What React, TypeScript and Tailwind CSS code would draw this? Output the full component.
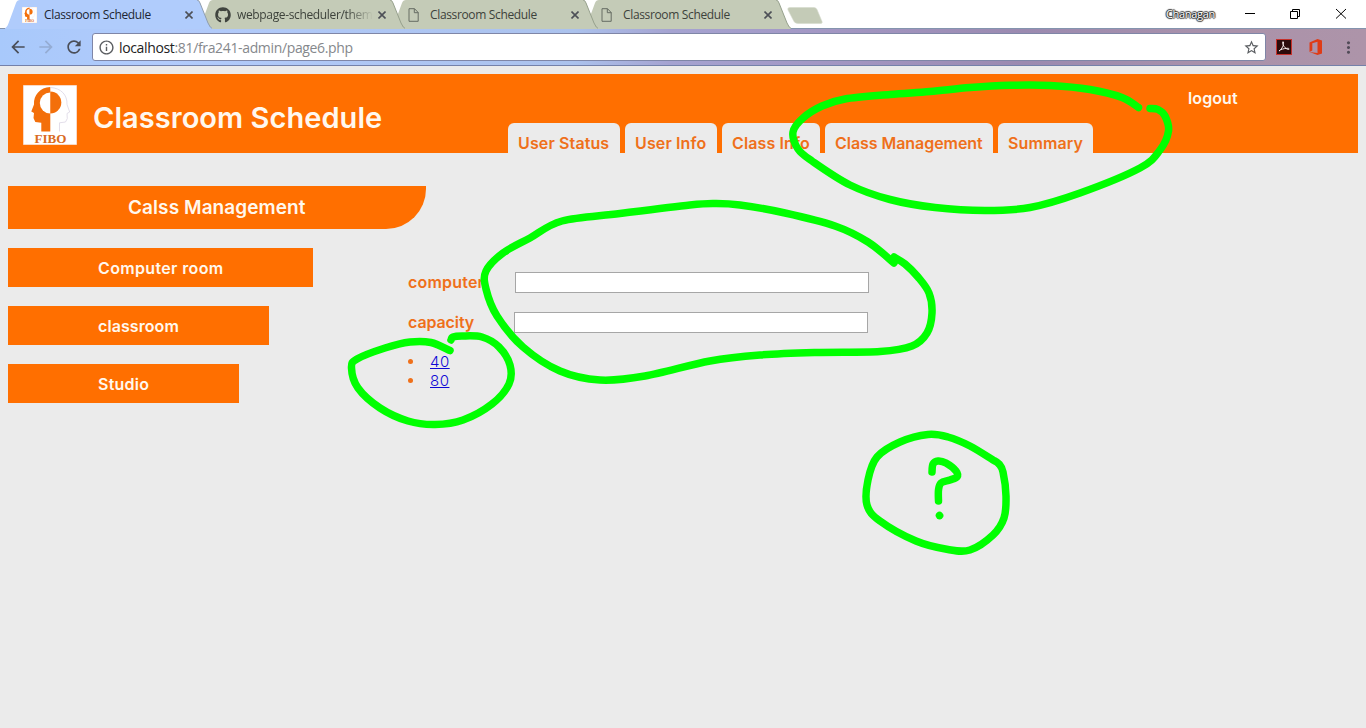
import React from "react";
import { FaGithub } from "react-icons/fa";
import { MdArrowBack, MdArrowForward, MdRefresh, MdMoreVert, MdStarBorder, MdInfoOutline } from "react-icons/md";

type Point = [number, number];

/** Smooth curve through a list of points (Catmull-Rom converted to cubic segments). */
function smooth(points: Point[]): string {
  let d = `M${points[0][0]} ${points[0][1]}`;
  for (let i = 0; i < points.length - 1; i++) {
    const p0 = points[Math.max(0, i - 1)];
    const p1 = points[i];
    const p2 = points[i + 1];
    const p3 = points[Math.min(points.length - 1, i + 2)];
    d += `C${p1[0] + (p2[0] - p0[0]) / 6} ${p1[1] + (p2[1] - p0[1]) / 6} ${p2[0] - (p3[0] - p1[0]) / 6} ${p2[1] - (p3[1] - p1[1]) / 6} ${p2[0]} ${p2[1]}`;
  }
  return d;
}

const strokes: Point[][] = [
  [[1138.5, 107.5], [1122, 97.5], [1090, 89.5], [1050, 85.5], [1010, 85.3], [970, 87.5], [930, 91.5], [890, 94.5], [845, 99], [822, 106], [803, 118], [793, 132], [798, 149], [812, 161], [850, 185], [890, 199.5], [935, 207.5], [985, 210.5], [1030, 207.5], [1080, 193], [1140, 168], [1160, 150], [1168.5, 131], [1165, 116], [1158, 109.500], [1150, 108.5]],
  [[894, 263], [868, 242], [835, 226], [785, 213], [740, 205], [715, 203.5], [690, 205], [620, 213.5], [562, 221], [530, 238], [503, 253], [486, 271], [486, 289], [497, 316], [523, 347], [560, 371], [600, 380], [645, 376], [710, 361], [760, 355], [815, 352.5], [880, 351.5], [912, 346], [927, 333], [932, 313], [929, 293], [918, 277], [905, 264], [894, 257]],
  [[450, 350.5], [431, 342.5], [410, 342], [385, 348], [357, 359], [351.5, 368], [358, 388], [380, 408], [408, 421], [435, 424.5], [463, 420], [492, 404], [509, 384], [510, 365], [499, 347], [482, 337], [462, 336], [453, 337], [451, 340]],
  [[993, 460], [970, 446], [948, 437], [928, 434.5], [900, 442], [877, 457], [868, 480], [867, 505], [880, 521], [916, 541], [948, 549.5], [970, 550], [993, 535], [1004, 518], [1006, 496], [1003, 472], [999, 464], [993, 460]],
  [[932, 472], [933, 464], [938, 461], [946, 463], [956, 471], [957, 477], [950, 480], [941, 483], [938.5, 490], [938.5, 501]],
  [[939.5, 515.5], [939.6, 515.6]],
];

function Fibo({ className }: { className: string }) {
  return (
    <svg viewBox="0 0 54 60" className={className} preserveAspectRatio="none">
      <rect width="54" height="60" fill="#fff" stroke="#f3b28a" />
      <path d="M27.300 2C17 2.500 10.500 10 11 19.500L8.300 26.500l2.700 1.500-.5 5 1.800 4 6 .8V46.500h9z" fill="#f36f0a" />
      <path d="M27.300 2.500C38 3 44.500 10 44 19.500L46.700 27l-2.700 1.500.3 5L42.500 37l-6 .8V46.500" fill="none" stroke="#dcd5e4" strokeWidth=".8" />
      <path d="M27.300 7.500a10.500 10.500 0 0 0 0 21z" fill="#fff" />
      <path d="M27.300 6.500a11 11 0 0 1 0 22z" fill="#f36f0a" />
      <text x="11.500" y="57.500" fontFamily="Liberation Serif, serif" fontWeight="bold" fontSize="11.500" textLength="32" lengthAdjust="spacingAndGlyphs" fill="#d96a20">FIBO</text>
    </svg>
  );
}

function Page() {
  return (
    <svg viewBox="0 0 11 14" className="h-3.5 w-[11px] shrink-0">
      <path d="M1 .7h5.500L10.200 4.500v8.800H1zM6.300.7v4h4" fill="none" stroke="#666c63" />
    </svg>
  );
}

function Cross() {
  return (
    <svg viewBox="0 0 8 8" className="size-2 shrink-0">
      <path d="M.5.5l7 7M7.500.5l-7 7" stroke="#4d5057" strokeWidth="1.600" />
    </svg>
  );
}

function BrowserTab({ icon, label, active = false, faded = false }: { icon: React.ReactNode; label: string; active?: boolean; faded?: boolean }) {
  const fade = faded ? " [mask-image:linear-gradient(90deg,#000_110px,transparent_136px)]" : "";
  return (
    <div className={active ? "relative z-40 -mr-[14px] h-[29px] w-[207px]" : "relative -mr-[14px] h-[28px] w-[207px]"}>
      <svg viewBox="0 0 207 29" className="absolute left-0 top-0 h-[29px] w-[207px]">
        <path d="M-2 29C2 28 3 25 4 22L11 3Q12 0 15 0H192Q194 0 195 3L203 23Q205 28 208 29z" fill={active ? "#b0ccfc" : "#c4cbb7"} />
        <path d="M192 0Q194 0 195 3L203 23Q205 28 208 29" fill="none" stroke={active ? "#8f9dae" : "#96a08c"} />
      </svg>
      <div className="relative flex h-[29px] items-center pl-[17px] pr-[19px]">
        <div className="flex w-[22px] shrink-0 items-center">{icon}</div>
        <span className={(active ? "flex-1 overflow-hidden whitespace-nowrap text-[12px] tracking-[-0.350px] text-[#202633]" : "flex-1 overflow-hidden whitespace-nowrap text-[12px] tracking-[-0.350px] text-[#3d423b]") + fade}>{label}</span>
        <Cross />
      </div>
    </div>
  );
}

function Chrome() {
  return (
    <div className="font-['Open_Sans',sans-serif]">
      <div className="flex h-[28px] bg-white pl-[5px]">
        <div className="relative z-40 flex"><BrowserTab active label="Classroom Schedule" icon={<Fibo className="h-4 w-[15px]" />} /></div>
        <div className="relative z-30 flex"><BrowserTab faded label="webpage-scheduler/them" icon={<FaGithub size={16} color="#40443f" />} /></div>
        <div className="relative z-20 flex"><BrowserTab label="Classroom Schedule" icon={<Page />} /></div>
        <div className="relative z-10 flex"><BrowserTab label="Classroom Schedule" icon={<Page />} /></div>
        <svg viewBox="0 0 36 18" className="ml-[10px] mt-[7px] h-[18px] w-9">
          <path d="M3 .5h24q2 0 3 2l5 12q1 2-2 2H11q-3 0-4-2L1 3q-1-2.500 2-2.500z" fill="#c4cbb7" stroke="#d5dacc" strokeWidth=".6" />
        </svg>
        <div className="ml-auto flex h-[28px] items-center">
          <span className="mr-[30px] text-[11px] tracking-[-0.300px] text-white [text-shadow:0_1px_1px_#222,1px_0_1px_#222,-1px_0_1px_#222,0_-1px_1px_#222]">Chanagan</span>
          <svg viewBox="0 0 104 12" className="mb-[2px] mr-[17px] h-3 w-[104px]" fill="none" stroke="#000">
            <path d="M0 6.500h10M45.500 4.500h7v7h-7zM47.500 4.500v-2h7v7h-2M91 2l10 9.500M101 2l-10 9.500" />
          </svg>
        </div>
      </div>
      <div className="flex h-[38px] items-center border-b border-t border-b-[#7481aa] border-t-[#8494ae] bg-[linear-gradient(90deg,#a8c9fb_0%,#b2cbfb_12%,#abc2ed_42%,#a5a3d1_49%,#a397c4_60%,#9b8ab0_75%,#ab92aa_90%,#ad94a9_100%)] pl-[8px]">
        <MdArrowBack size={20} color="#4a4e58" />
        <MdArrowForward size={20} color="#94acd3" className="ml-[8px]" />
        <MdRefresh size={20} color="#4a4e58" className="ml-[8px]" />
        <div className="ml-[8px] flex h-[28px] w-[1174px] items-center rounded-[3px] border border-[#7f86a7] bg-white pl-[5px]">
          <MdInfoOutline size={17} color="#5a5d61" />
          <span className="ml-[4px] text-[14px] tracking-[-0.350px] text-[#85888c]"><span className="text-[#222]">localhost</span>:81/fra241-admin/page6.php</span>
          <MdStarBorder size={17} color="#5a5d61" className="ml-auto mr-[5px]" />
        </div>
        <svg viewBox="0 0 16 16" className="ml-[10px] size-4">
          <rect x=".5" y=".5" width="15" height="15" fill="#2b0b0b" stroke="#c5302b" />
          <path d="M3 12c3-2 5-6 4.500-9-.6-1-1.500.2-.5 2.500 1 2.500 3 4.500 5.500 5 1.500-.2.500-1.500-1.500-1.200-3 .2-6.500 1-8 2.700z" fill="none" stroke="#f2e7e7" />
        </svg>
        <svg viewBox="0 0 14 16" className="ml-[17px] h-4 w-3.5">
          <path d="M0.500 3.500L8.500 0 13 1.500v13L8.500 16 0.500 13l8 1V2.800L3.300 4.200v7.300L0.500 13z" fill="#df3b16" />
        </svg>
        <MdMoreVert size={19} color="#514b58" className="ml-[16px]" />
      </div>
    </div>
  );
}

const tabs = [
  { label: "User Status", style: "h-[31px] w-[112px] rounded-t-[6px] bg-[#ebebeb] pl-[10px] pt-[9px] tracking-[0.120px]" },
  { label: "User Info", style: "h-[31px] w-[92px] rounded-t-[6px] bg-[#ebebeb] pl-[10px] pt-[9px] tracking-[0.120px]" },
  { label: "Class Info", style: "h-[31px] w-[98px] rounded-t-[6px] bg-[#ebebeb] pl-[10px] pt-[9px] tracking-[0.120px]" },
  { label: "Class Management", style: "h-[31px] w-[168px] rounded-t-[6px] bg-[#ebebeb] pl-[10px] pt-[9px] tracking-[-0.050px]" },
  { label: "Summary", style: "h-[31px] w-[95px] rounded-t-[6px] bg-[#ebebeb] pl-[10px] pt-[9px] tracking-[0.100px]" },
];

export default function App() {
  return (
    <div className="relative h-[728px] w-[1366px] overflow-hidden bg-[#ebebeb] font-['Inter',sans-serif]">
      <Chrome />
      <div className="px-2 pt-2">
        <header className="flex h-[79px] bg-[#ff6f00] pl-[15px] text-[#fff8ee]">
          <Fibo className="mt-[11px] h-[60px] w-[54px]" />
          <h1 className="ml-[16px] mt-[25px] w-[415px] whitespace-nowrap text-[29px] font-semibold leading-[38px] tracking-[0.050px]">Classroom Schedule</h1>
          <nav className="mt-[49px] flex gap-[5px] whitespace-nowrap text-[16px] font-semibold leading-[22px] text-[#ef701a]">
            {tabs.map((t) => <div key={t.label} className={t.style}>{t.label}</div>)}
          </nav>
          <div className="ml-[95px] mt-[13px] text-[16px] font-semibold leading-[22px] tracking-[0.100px]">logout</div>
        </header>
        <main className="flex pt-[33px]">
          <aside className="w-[400px] shrink-0 text-[16px] font-semibold text-[#fff8ee]">
            <h2 className="flex h-[43px] w-[418px] items-center rounded-br-[40px] bg-[#ff6f00] pl-[120px] pt-px text-[19px] tracking-[0.080px]">Calss Management</h2>
            <div className="mt-[19px] flex h-[39px] w-[305px] items-center bg-[#ff6f00] pl-[90px] tracking-[0.350px]">Computer room</div>
            <div className="mt-[19px] flex h-[39px] w-[261px] items-center bg-[#ff6f00] pl-[90px] tracking-[0.080px]">classroom</div>
            <div className="mt-[19px] flex h-[39px] w-[231px] items-center bg-[#ff6f00] pl-[90px] tracking-[0.250px]">Studio</div>
          </aside>
          <form className="pt-[86px] text-[16px] font-semibold text-[#ef701a]">
            <label className="flex h-[21px] items-center"><span className="w-[107px] pb-[2px] tracking-[0.200px]">computer</span><input className="h-[21px] w-[354px] border border-[#a6a6a6] bg-white" /></label>
            <label className="mt-[19px] flex h-[21px] items-center"><span className="w-[106px] pb-[2px] tracking-[-0.100px]">capacity</span><input className="h-[21px] w-[354px] border border-[#a6a6a6] bg-white" /></label>
            <ul className="mt-[19px] text-[15px] font-light leading-[19px] text-[#0f08d6]">
              <li className="flex items-center"><span className="mr-[17px] size-[5px] rounded-full bg-[#ef701a]" /><a className="tracking-[0.500px] underline" href="#40">40</a></li>
              <li className="flex items-center"><span className="mr-[17px] size-[5px] rounded-full bg-[#ef701a]" /><a className="tracking-[0.500px] underline" href="#80">80</a></li>
            </ul>
          </form>
        </main>
      </div>
      <svg viewBox="0 0 1366 728" className="pointer-events-none absolute inset-0 z-50 h-[728px] w-[1366px]" fill="none" stroke="#00ff00" strokeWidth="7.500" strokeLinecap="round" strokeLinejoin="round">
        {strokes.map((s, i) => <path key={i} d={smooth(s)} />)}
      </svg>
    </div>
  );
}
